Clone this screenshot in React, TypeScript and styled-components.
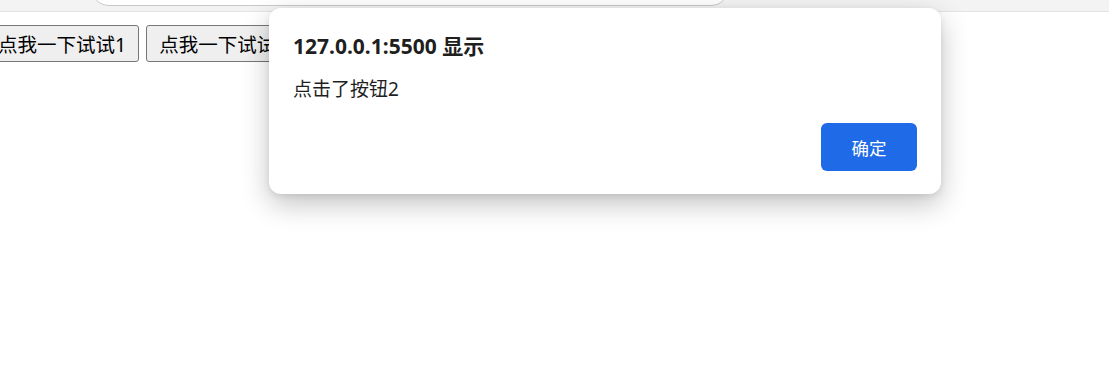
import * as React from 'react';
import styled, { createGlobalStyle } from 'styled-components';

const GlobalStyle = createGlobalStyle`
  html, body {
    margin: 0;
    padding: 0;
    background: #ffffff;
    overflow: hidden;
  }
  body {
    font-family: "Noto Sans", "Noto Sans CJK SC", sans-serif;
  }
`;

const Page = styled.div`
  position: relative;
  width: 1109px;
  height: 371px;
  background: #ffffff;
`;

const BrowserStrip = styled.div`
  display: flex;
  height: 11px;
  background: #f3f3f3;
  border-bottom: 1px solid #e4e4e4;
  overflow: hidden;
`;

const AddressPill = styled.div`
  margin-left: 91px;
  margin-top: -20px;
  width: 636px;
  height: 24px;
  background: #ffffff;
  border: 1px solid #c9c9c9;
  border-radius: 0 0 18px 18px;
`;

const Content = styled.div`
  display: flex;
  gap: 7px;
  margin-top: 13px;
  margin-left: -15px;
`;

const PageButton = styled.button`
  height: 37px;
  padding: 0 12px;
  background: #efefef;
  border: 1px solid #767676;
  border-radius: 3px;
  color: #000000;
  font-family: "Noto Sans", "Noto Sans CJK SC", sans-serif;
  font-size: 19.5px;
  white-space: nowrap;
`;

const Dialog = styled.div`
  position: absolute;
  top: 8px;
  left: 269px;
  width: 672px;
  box-sizing: border-box;
  padding: 25px 24px 23px;
  display: flex;
  flex-direction: column;
  background: #ffffff;
  border-radius: 12px;
  box-shadow: 0 10px 28px rgba(0, 0, 0, 0.24), 0 2px 6px rgba(0, 0, 0, 0.08);
`;

const DialogTitle = styled.div`
  font-family: "Noto Sans", "Noto Sans CJK SC", sans-serif;
  font-size: 21px;
  font-weight: 700;
  line-height: 26px;
  color: #1f1f1f;
`;

const DialogMessage = styled.div`
  margin-top: 18px;
  font-family: "Noto Sans", "Noto Sans CJK SC", sans-serif;
  font-size: 19px;
  line-height: 24px;
  color: #1f1f1f;
`;

const Actions = styled.div`
  display: flex;
  justify-content: flex-end;
  margin-top: 22px;
`;

const ConfirmButton = styled.button`
  width: 96px;
  height: 48px;
  border: none;
  border-radius: 6px;
  background: #1f6ae6;
  color: #ffffff;
  font-family: "Noto Sans", "Noto Sans CJK SC", sans-serif;
  font-size: 17.5px;
`;

export default function App() {
  return (
    <>
      <GlobalStyle />
      <Page>
        <BrowserStrip>
          <AddressPill />
        </BrowserStrip>
        <Content>
          <PageButton>点我一下试试1</PageButton>
          <PageButton>点我一下试试2</PageButton>
        </Content>
        <Dialog>
          <DialogTitle>127.0.0.1:5500 显示</DialogTitle>
          <DialogMessage>点击了按钮2</DialogMessage>
          <Actions>
            <ConfirmButton>确定</ConfirmButton>
          </Actions>
        </Dialog>
      </Page>
    </>
  );
}
